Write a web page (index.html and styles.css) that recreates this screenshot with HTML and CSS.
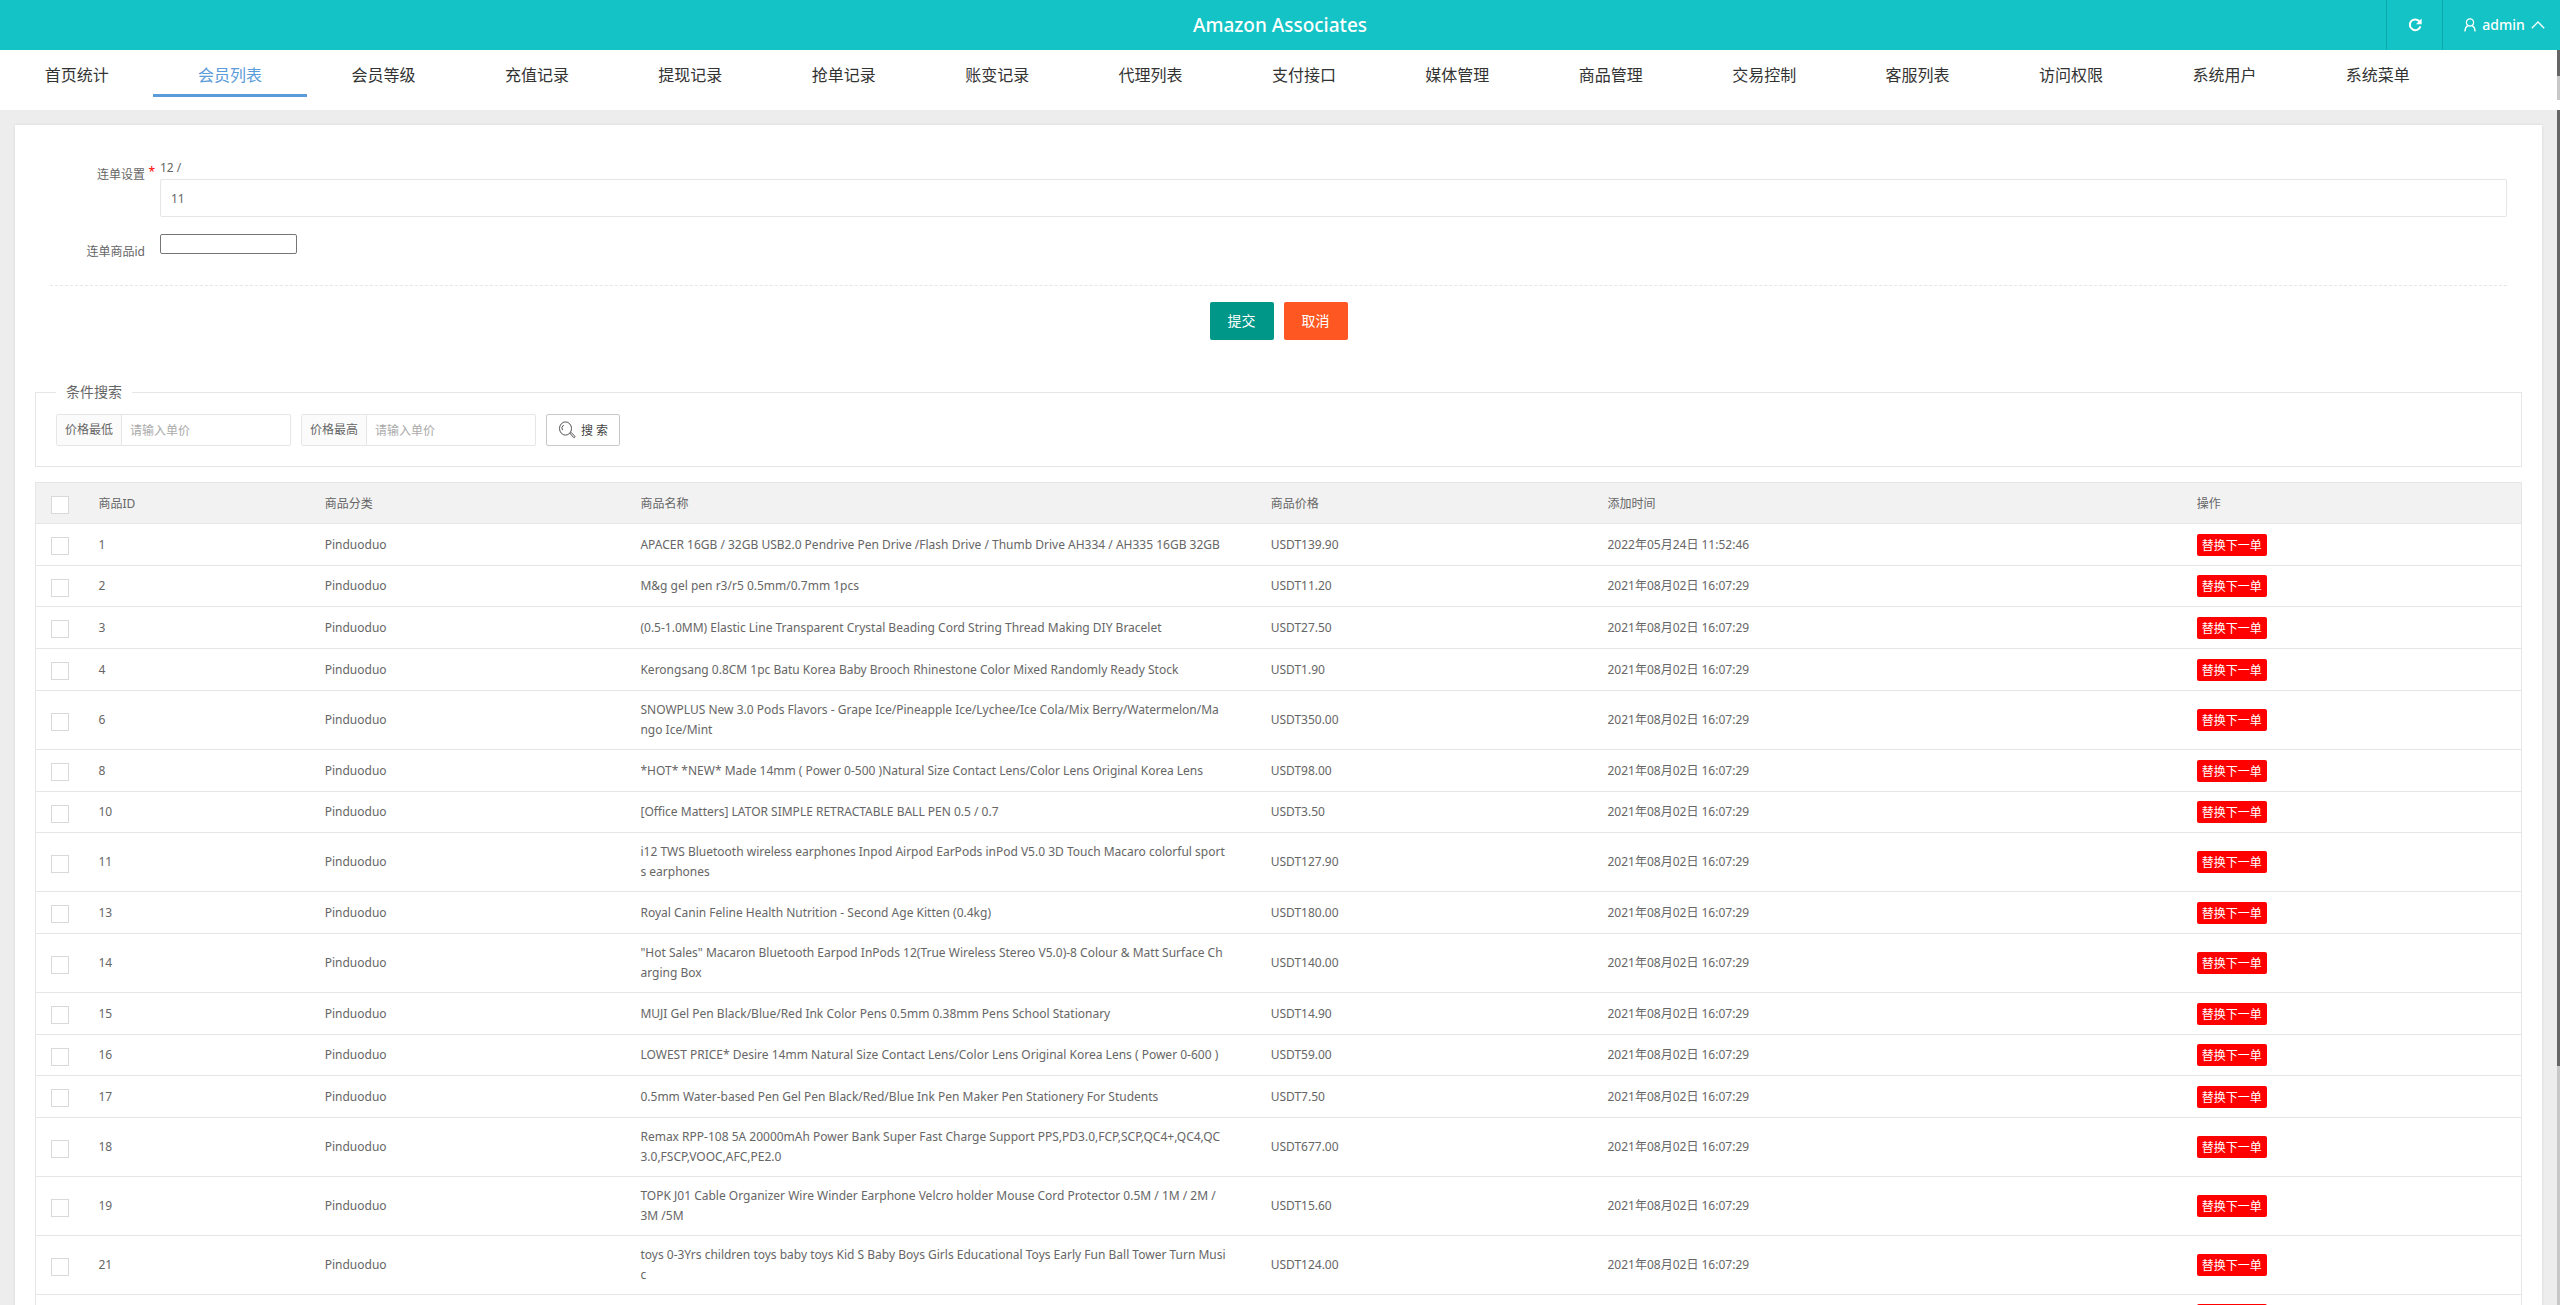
FILE: index.html
```
<!DOCTYPE html>
<html lang="zh-CN">
<head>
    <meta charset="UTF-8">
    <title>Amazon Associates</title>
    <link rel="stylesheet" href="styles.css">
</head>
<body>
    <!-- 顶部栏 -->
    <header class="header">
        <h1 class="header-title">Amazon Associates</h1>
        <div class="header-right">
            <button type="button" class="header-item refresh" aria-label="刷新">
                <svg width="14" height="14" viewBox="0 0 14 14" fill="none" stroke="currentColor" stroke-width="2"><path d="M11.6 3.6A5.4 5.4 0 1 0 12.4 8.4"/><path d="M13.6 .6v5.6H8z" fill="currentColor" stroke="none"/></svg>
            </button>
            <a href="#" class="header-item user">
                <svg width="12" height="14" viewBox="0 0 12 14" fill="none" stroke="currentColor" stroke-width="1.3"><circle cx="6" cy="4.4" r="3.6"/><path d="M3.8 7.6C2 8.6 1 10.4.9 13.4M8.2 7.6c1.8 1 2.8 2.8 2.9 5.8"/></svg>
                <span>admin</span>
                <svg width="14" height="8" viewBox="0 0 14 8" fill="none" stroke="currentColor" stroke-width="1.3"><path d="M.8 7.2 7 1l6.2 6.2"/></svg>
            </a>
        </div>
    </header>

    <!-- 菜单 -->
    <nav class="nav">
        <a href="#">首页统计</a>
        <a href="#" class="active">会员列表</a>
        <a href="#">会员等级</a>
        <a href="#">充值记录</a>
        <a href="#">提现记录</a>
        <a href="#">抢单记录</a>
        <a href="#">账变记录</a>
        <a href="#">代理列表</a>
        <a href="#">支付接口</a>
        <a href="#">媒体管理</a>
        <a href="#">商品管理</a>
        <a href="#">交易控制</a>
        <a href="#">客服列表</a>
        <a href="#">访问权限</a>
        <a href="#">系统用户</a>
        <a href="#">系统菜单</a>
        <span class="scrollbar nav-scrollbar"></span>
    </nav>

    <main class="main">
        <div class="card">
            <!-- 连单设置 -->
            <form class="form">
                <div class="form-item">
                    <label class="form-label required" for="order-set">连单设置</label>
                    <div class="form-block">
                        <div class="form-text">12 /</div>
                        <input type="text" class="input" id="order-set" value="11">
                    </div>
                </div>
                <div class="form-item item-goods">
                    <label class="form-label" for="goods-id">连单商品id</label>
                    <div class="form-block">
                        <input type="text" class="plain-input" id="goods-id">
                    </div>
                </div>
                <div class="form-buttons">
                    <button type="submit" class="btn btn-submit">提交</button>
                    <button type="button" class="btn btn-cancel">取消</button>
                </div>
            </form>

            <!-- 条件搜索 -->
            <fieldset class="search">
                <legend>条件搜索</legend>
                <div class="search-row">
                    <div class="search-group">
                        <label for="price-min">价格最低</label>
                        <input type="text" id="price-min" placeholder="请输入单价">
                    </div>
                    <div class="search-group">
                        <label for="price-max">价格最高</label>
                        <input type="text" id="price-max" placeholder="请输入单价">
                    </div>
                    <button type="button" class="btn-search">
                        <svg width="18" height="18" viewBox="0 0 18 18" fill="none" stroke="#555"><ellipse cx="7.500" cy="7.500" rx="6" ry="6.600"/><path d="M4.4 9.2A4.2 4.2 0 0 1 5.6 4"/><path d="m12.2 12.6 1.200-1 3.4 3.6c.7.9-.5 2-1.300 1.200z"/></svg>
                        搜 索
                    </button>
                </div>
            </fieldset>

            <!-- 商品列表 -->
            <table class="table">
                <colgroup>
                    <col class="col-check">
                    <col class="col-id">
                    <col class="col-cate">
                    <col class="col-name">
                    <col class="col-price">
                    <col class="col-time">
                    <col>
                </colgroup>
                <thead>
                    <tr><th><input type="checkbox" aria-label="全选"></th><th>商品ID</th><th>商品分类</th><th>商品名称</th><th>商品价格</th><th>添加时间</th><th>操作</th></tr>
                </thead>
                <tbody>
                    <tr><td><input type="checkbox" aria-label="1"></td><td>1</td><td>Pinduoduo</td><td>APACER 16GB / 32GB USB2.0 Pendrive Pen Drive /Flash Drive / Thumb Drive AH334 / AH335 16GB 32GB</td><td>USDT139.90</td><td>2022年05月24日 11:52:46</td><td><button type="button" class="btn-replace">替换下一单</button></td></tr>
                    <tr><td><input type="checkbox" aria-label="2"></td><td>2</td><td>Pinduoduo</td><td>M&amp;g gel pen r3/r5 0.5mm/0.7mm 1pcs</td><td>USDT11.20</td><td>2021年08月02日 16:07:29</td><td><button type="button" class="btn-replace">替换下一单</button></td></tr>
                    <tr><td><input type="checkbox" aria-label="3"></td><td>3</td><td>Pinduoduo</td><td>(0.5-1.0MM) Elastic Line Transparent Crystal Beading Cord String Thread Making DIY Bracelet</td><td>USDT27.50</td><td>2021年08月02日 16:07:29</td><td><button type="button" class="btn-replace">替换下一单</button></td></tr>
                    <tr><td><input type="checkbox" aria-label="4"></td><td>4</td><td>Pinduoduo</td><td>Kerongsang 0.8CM 1pc Batu Korea Baby Brooch Rhinestone Color Mixed Randomly Ready Stock</td><td>USDT1.90</td><td>2021年08月02日 16:07:29</td><td><button type="button" class="btn-replace">替换下一单</button></td></tr>
                    <tr><td><input type="checkbox" aria-label="6"></td><td>6</td><td>Pinduoduo</td><td>SNOWPLUS New 3.0 Pods Flavors - Grape Ice/Pineapple Ice/Lychee/Ice Cola/Mix Berry/Watermelon/Ma<br>ngo Ice/Mint</td><td>USDT350.00</td><td>2021年08月02日 16:07:29</td><td><button type="button" class="btn-replace">替换下一单</button></td></tr>
                    <tr><td><input type="checkbox" aria-label="8"></td><td>8</td><td>Pinduoduo</td><td>*HOT* *NEW* Made 14mm ( Power 0-500 )Natural Size Contact Lens/Color Lens Original Korea Lens</td><td>USDT98.00</td><td>2021年08月02日 16:07:29</td><td><button type="button" class="btn-replace">替换下一单</button></td></tr>
                    <tr><td><input type="checkbox" aria-label="10"></td><td>10</td><td>Pinduoduo</td><td>[Office Matters] LATOR SIMPLE RETRACTABLE BALL PEN 0.5 / 0.7</td><td>USDT3.50</td><td>2021年08月02日 16:07:29</td><td><button type="button" class="btn-replace">替换下一单</button></td></tr>
                    <tr><td><input type="checkbox" aria-label="11"></td><td>11</td><td>Pinduoduo</td><td>i12 TWS Bluetooth wireless earphones Inpod Airpod EarPods inPod V5.0 3D Touch Macaro colorful sport<br>s earphones</td><td>USDT127.90</td><td>2021年08月02日 16:07:29</td><td><button type="button" class="btn-replace">替换下一单</button></td></tr>
                    <tr><td><input type="checkbox" aria-label="13"></td><td>13</td><td>Pinduoduo</td><td>Royal Canin Feline Health Nutrition - Second Age Kitten (0.4kg)</td><td>USDT180.00</td><td>2021年08月02日 16:07:29</td><td><button type="button" class="btn-replace">替换下一单</button></td></tr>
                    <tr><td><input type="checkbox" aria-label="14"></td><td>14</td><td>Pinduoduo</td><td>"Hot Sales" Macaron Bluetooth Earpod InPods 12(True Wireless Stereo V5.0)-8 Colour &amp; Matt Surface Ch<br>arging Box</td><td>USDT140.00</td><td>2021年08月02日 16:07:29</td><td><button type="button" class="btn-replace">替换下一单</button></td></tr>
                    <tr><td><input type="checkbox" aria-label="15"></td><td>15</td><td>Pinduoduo</td><td>MUJI Gel Pen Black/Blue/Red Ink Color Pens 0.5mm 0.38mm Pens School Stationary</td><td>USDT14.90</td><td>2021年08月02日 16:07:29</td><td><button type="button" class="btn-replace">替换下一单</button></td></tr>
                    <tr><td><input type="checkbox" aria-label="16"></td><td>16</td><td>Pinduoduo</td><td>LOWEST PRICE* Desire 14mm Natural Size Contact Lens/Color Lens Original Korea Lens ( Power 0-600 )</td><td>USDT59.00</td><td>2021年08月02日 16:07:29</td><td><button type="button" class="btn-replace">替换下一单</button></td></tr>
                    <tr><td><input type="checkbox" aria-label="17"></td><td>17</td><td>Pinduoduo</td><td>0.5mm Water-based Pen Gel Pen Black/Red/Blue Ink Pen Maker Pen Stationery For Students</td><td>USDT7.50</td><td>2021年08月02日 16:07:29</td><td><button type="button" class="btn-replace">替换下一单</button></td></tr>
                    <tr><td><input type="checkbox" aria-label="18"></td><td>18</td><td>Pinduoduo</td><td>Remax RPP-108 5A 20000mAh Power Bank Super Fast Charge Support PPS,PD3.0,FCP,SCP,QC4+,QC4,QC<br>3.0,FSCP,VOOC,AFC,PE2.0</td><td>USDT677.00</td><td>2021年08月02日 16:07:29</td><td><button type="button" class="btn-replace">替换下一单</button></td></tr>
                    <tr><td><input type="checkbox" aria-label="19"></td><td>19</td><td>Pinduoduo</td><td>TOPK J01 Cable Organizer Wire Winder Earphone Velcro holder Mouse Cord Protector 0.5M / 1M / 2M /<br>3M /5M</td><td>USDT15.60</td><td>2021年08月02日 16:07:29</td><td><button type="button" class="btn-replace">替换下一单</button></td></tr>
                    <tr><td><input type="checkbox" aria-label="21"></td><td>21</td><td>Pinduoduo</td><td>toys 0-3Yrs children toys baby toys Kid S Baby Boys Girls Educational Toys Early Fun Ball Tower Turn Musi<br>c</td><td>USDT124.00</td><td>2021年08月02日 16:07:29</td><td><button type="button" class="btn-replace">替换下一单</button></td></tr>
                    <tr><td></td><td></td><td></td><td></td><td></td><td></td><td><button type="button" class="btn-replace">替换下一单</button></td></tr>
                </tbody>
            </table>
        </div>
    </main>
    <span class="scrollbar main-scrollbar"></span>
</body>
</html>
```
FILE: styles.css
```
* {
    box-sizing: border-box;
}

body {
    display: flex;
    flex-direction: column;
    position: relative;
    height: 100vh;
    margin: 0;
    overflow: hidden;
    font-family: "Noto Sans", "Noto Sans CJK SC", sans-serif;
    font-size: 12px;
    line-height: 20px;
    color: #666;
    background-color: #ededed;
}

button,
input {
    font-family: inherit;
    font-size: inherit;
    color: inherit;
}

a {
    color: inherit;
    text-decoration: none;
}

/* 顶部栏 */
.header {
    display: grid;
    grid-template-columns: 1fr auto 1fr;
    flex: none;
    height: 50px;
    color: #fff;
    background-color: #14c3c5;
}

.header-title {
    grid-column: 2;
    margin: 0;
    font-size: 19px;
    font-weight: 500;
    line-height: 50px;
}

.header-right {
    display: flex;
    justify-content: flex-end;
}

.header-item {
    display: flex;
    align-items: center;
    justify-content: center;
    border: 0;
    border-left: 1px solid #0fa9ab;
    background: none;
}

.refresh {
    width: 56px;
    padding: 0;
    color: #fff;
}

.user {
    gap: 6px;
    width: 118px;
    padding-left: 6px;
    font-size: 14px;
    font-weight: 500;
}

/* 菜单 */
.nav {
    display: flex;
    flex: none;
    position: relative;
    height: 60px;
    padding-right: 3px;
    background-color: #fff;
}

.nav a {
    width: 6%;
    height: 47px;
    padding-top: 10px;
    font-size: 16px;
    line-height: 30px;
    text-align: center;
    color: #333;
}

.nav .active {
    color: #5a9bd9;
    border-bottom: 3px solid #5a9bd9;
}

/* 右侧滚动条 */
.scrollbar {
    position: absolute;
    right: 0;
    width: 3px;
}

.nav-scrollbar {
    top: 0;
    height: 50px;
    background: linear-gradient(#666 52%, #c8c8c8 52%);
}

.main-scrollbar {
    top: 110px;
    bottom: 0;
    background: linear-gradient(#666 80%, #c8c8c8 80%);
}

/* 内容 */
.main {
    flex: 1;
    min-height: 0;
    padding: 15px 18px 0 15px;
    overflow: hidden;
}

.card {
    padding: 35px 20px 20px;
    background-color: #fff;
    box-shadow: 0 0 3px rgba(0, 0, 0, 0.1);
}

/* 表单 */
.form {
    padding: 0 15px;
}

.form-item {
    display: flex;
    gap: 15px;
}

.form-label {
    position: relative;
    width: 95px;
    padding-top: 5px;
    text-align: right;
}

.required::after {
    content: "*";
    position: absolute;
    top: 2px;
    right: -10px;
    color: #f00;
}

.form-block {
    flex: 1;
}

.form-text {
    height: 19px;
    line-height: 16px;
}

.input {
    display: block;
    width: 100%;
    height: 38px;
    padding: 0 10px;
    border: 1px solid #e6e6e6;
    border-radius: 2px;
}

.item-goods {
    margin-top: 17px;
}

.item-goods .form-label {
    padding-top: 8px;
}

.plain-input {
    display: block;
    width: 137px;
    height: 20px;
    border: 1px solid #767676;
    border-radius: 2px;
}

.form-buttons {
    display: flex;
    justify-content: center;
    gap: 10px;
    margin-top: 23px;
    padding-top: 16px;
    border-top: 1px dashed #e6e6e6;
}

.btn {
    width: 64px;
    height: 38px;
    padding: 0 0 2px;
    border: 0;
    border-radius: 2px;
    font-size: 14px;
    color: #fff;
}

.btn-submit {
    background-color: #009688;
}

.btn-cancel {
    background-color: #ff5722;
}

/* 搜索 */
.search {
    margin: 42px 0 15px;
    padding: 12px 20px 20px;
    border: 1px solid #e6e6e6;
}

.search legend {
    padding: 0 10px;
    font-size: 14px;
}

.search-row {
    display: flex;
    gap: 10px;
}

.search-group {
    display: flex;
    width: 235px;
    height: 32px;
    border: 1px solid #e6e6e6;
    border-radius: 2px;
}

.search-group label {
    padding: 0 8px;
    line-height: 30px;
    border-right: 1px solid #e6e6e6;
    background-color: #fbfbfb;
}

.search-group input {
    flex: 1;
    min-width: 0;
    padding: 0 8px;
    border: 0;
    background: none;
}

.search-group input::placeholder {
    color: #aaa;
}

.btn-search {
    display: flex;
    align-items: center;
    justify-content: center;
    gap: 5px;
    width: 74px;
    height: 32px;
    padding: 0;
    border: 1px solid #c9c9c9;
    border-radius: 2px;
    color: #444;
    background-color: #fff;
}

/* 表格 */
.table {
    width: 100%;
    table-layout: fixed;
    border: 1px solid #e6e6e6;
    border-collapse: collapse;
    word-break: break-all;
}

.col-check { width: 48px; }
.col-id { width: 9.1%; }
.col-cate { width: 12.7%; }
.col-name { width: 25.35%; }
.col-price { width: 13.55%; }
.col-time { width: 23.7%; }

.table th,
.table td {
    padding: 9px 15px;
    border-bottom: 1px solid #e6e6e6;
    font-weight: 400;
    text-align: left;
}

.table th {
    padding-top: 10px;
}

.table thead {
    background-color: #f2f2f2;
}

.table tbody tr {
    height: 42px;
}

.table tbody tr:nth-child(5n+2) {
    height: 41px;
}

.table input {
    display: block;
    appearance: none;
    width: 18px;
    height: 18px;
    margin: 3px 0 0;
    border: 1px solid #d9d9d9;
    background-color: #fff;
}

.btn-replace {
    display: inline-block;
    vertical-align: middle;
    height: 22px;
    padding: 0 5px;
    border: 0;
    border-radius: 2px;
    color: #fff;
    background-color: #f00;
}
```
